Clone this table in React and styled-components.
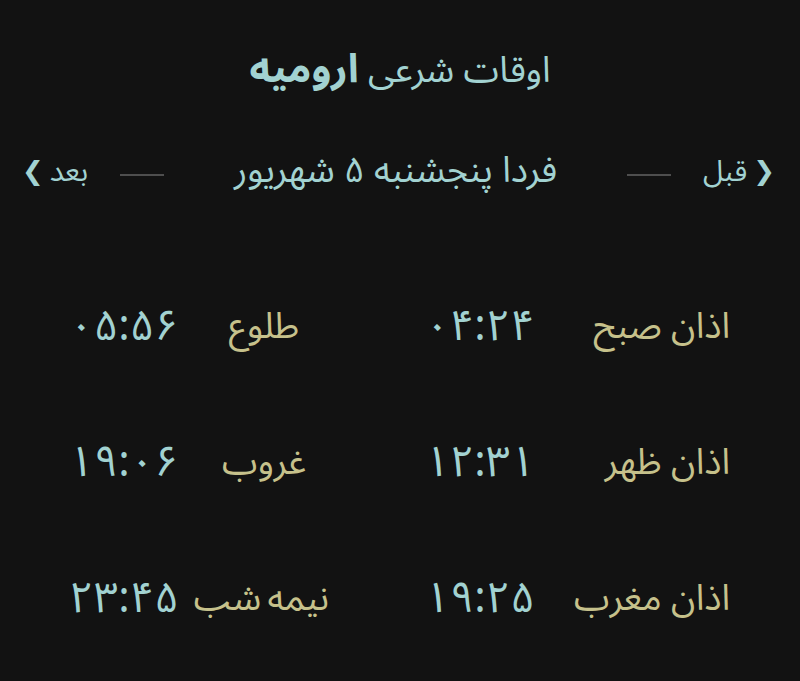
import React from 'react'
import styled, { createGlobalStyle } from 'styled-components'

const GlobalStyle = createGlobalStyle`
  html, body {
    margin: 0;
    padding: 0;
    background: #121212;
  }
  body {
    font-family: "Noto Sans Arabic", "DejaVu Sans", sans-serif;
  }
`

const times = [
  { a: 'اذان صبح', at: '۰۴:۲۴', b: 'طلوع', bt: '۰۵:۵۶' },
  { a: 'اذان ظهر', at: '۱۲:۳۱', b: 'غروب', bt: '۱۹:۰۶' },
  { a: 'اذان مغرب', at: '۱۹:۲۵', b: 'نیمه شب', bt: '۲۳:۴۵' },
]

function App() {
  return (
    <>
      <GlobalStyle />
      <Page dir='rtl'>
        <Title>
          اوقات شرعی <City>ارومیه</City>
        </Title>

        <Nav>
          <NavLink>
            <Chevron>❮</Chevron>
            قبل
          </NavLink>
          <Dash />
          <DayText>فردا پنجشنبه ۵ شهریور</DayText>
          <Dash />
          <NavLink>
            بعد
            <Chevron>❯</Chevron>
          </NavLink>
        </Nav>

        <Table>
          {times.map((t) => (
            <Row key={t.a}>
              <Label>{t.a}</Label>
              <Time>{t.at}</Time>
              <Label $col={4} $center>{t.b}</Label>
              <Time $col={6}>{t.bt}</Time>
            </Row>
          ))}
        </Table>
      </Page>
    </>
  )
}

export default App

const Page = styled.div`
  width: 800px;
  height: 681px;
  background: #121212;
  color: #a2d2d1;
  box-sizing: border-box;
  padding-top: 44px;
  overflow: hidden;
`

const Title = styled.h1`
  margin: 0;
  text-align: center;
  font-size: 36px;
  font-weight: normal;
  line-height: 52px;
  color: #a2d2d1;
`

const City = styled.span`
  font-size: 40px;
  font-weight: bold;
`

const Nav = styled.div`
  display: flex;
  align-items: center;
  padding: 0 25px 0 22px;
  margin-top: 50px;
  height: 48px;
  gap: 32px;
`

const NavLink = styled.div`
  display: flex;
  align-items: center;
  gap: 6px;
  font-size: 29px;
  color: #a2d2d1;
`

const Chevron = styled.span`
  font-size: 26px;
  font-weight: bold;
  color: #a2d2d1;
`

const Dash = styled.div`
  width: 44px;
  height: 2px;
  margin-top: 8px;
  background: #4e4e4e;
`

const DayText = styled.div`
  flex: 1;
  font-size: 36px;
  text-align: center;
  white-space: nowrap;
`

const Table = styled.div`
  margin-top: 86px;
  display: flex;
  flex-direction: column;
  gap: 88px;
`

const Row = styled.div`
  display: grid;
  grid-template-columns: 185px 130px 86px 130px 20px 110px;
  padding-right: 70px;
  align-items: center;
  height: 48px;
`

const Label = styled.div`
  grid-column: ${(p) => p.$col || 1};
  text-align: ${(p) => (p.$center ? 'center' : 'right')};
  word-spacing: ${(p) => (p.$center ? '-3px' : '0')};
  font-size: 36px;
  color: #c6c18b;
  white-space: nowrap;
`

const Time = styled.div`
  grid-column: ${(p) => p.$col || 2};
  text-align: center;
  font-size: 43px;
  color: #a2d2d1;
  white-space: nowrap;
  direction: ltr;
`
